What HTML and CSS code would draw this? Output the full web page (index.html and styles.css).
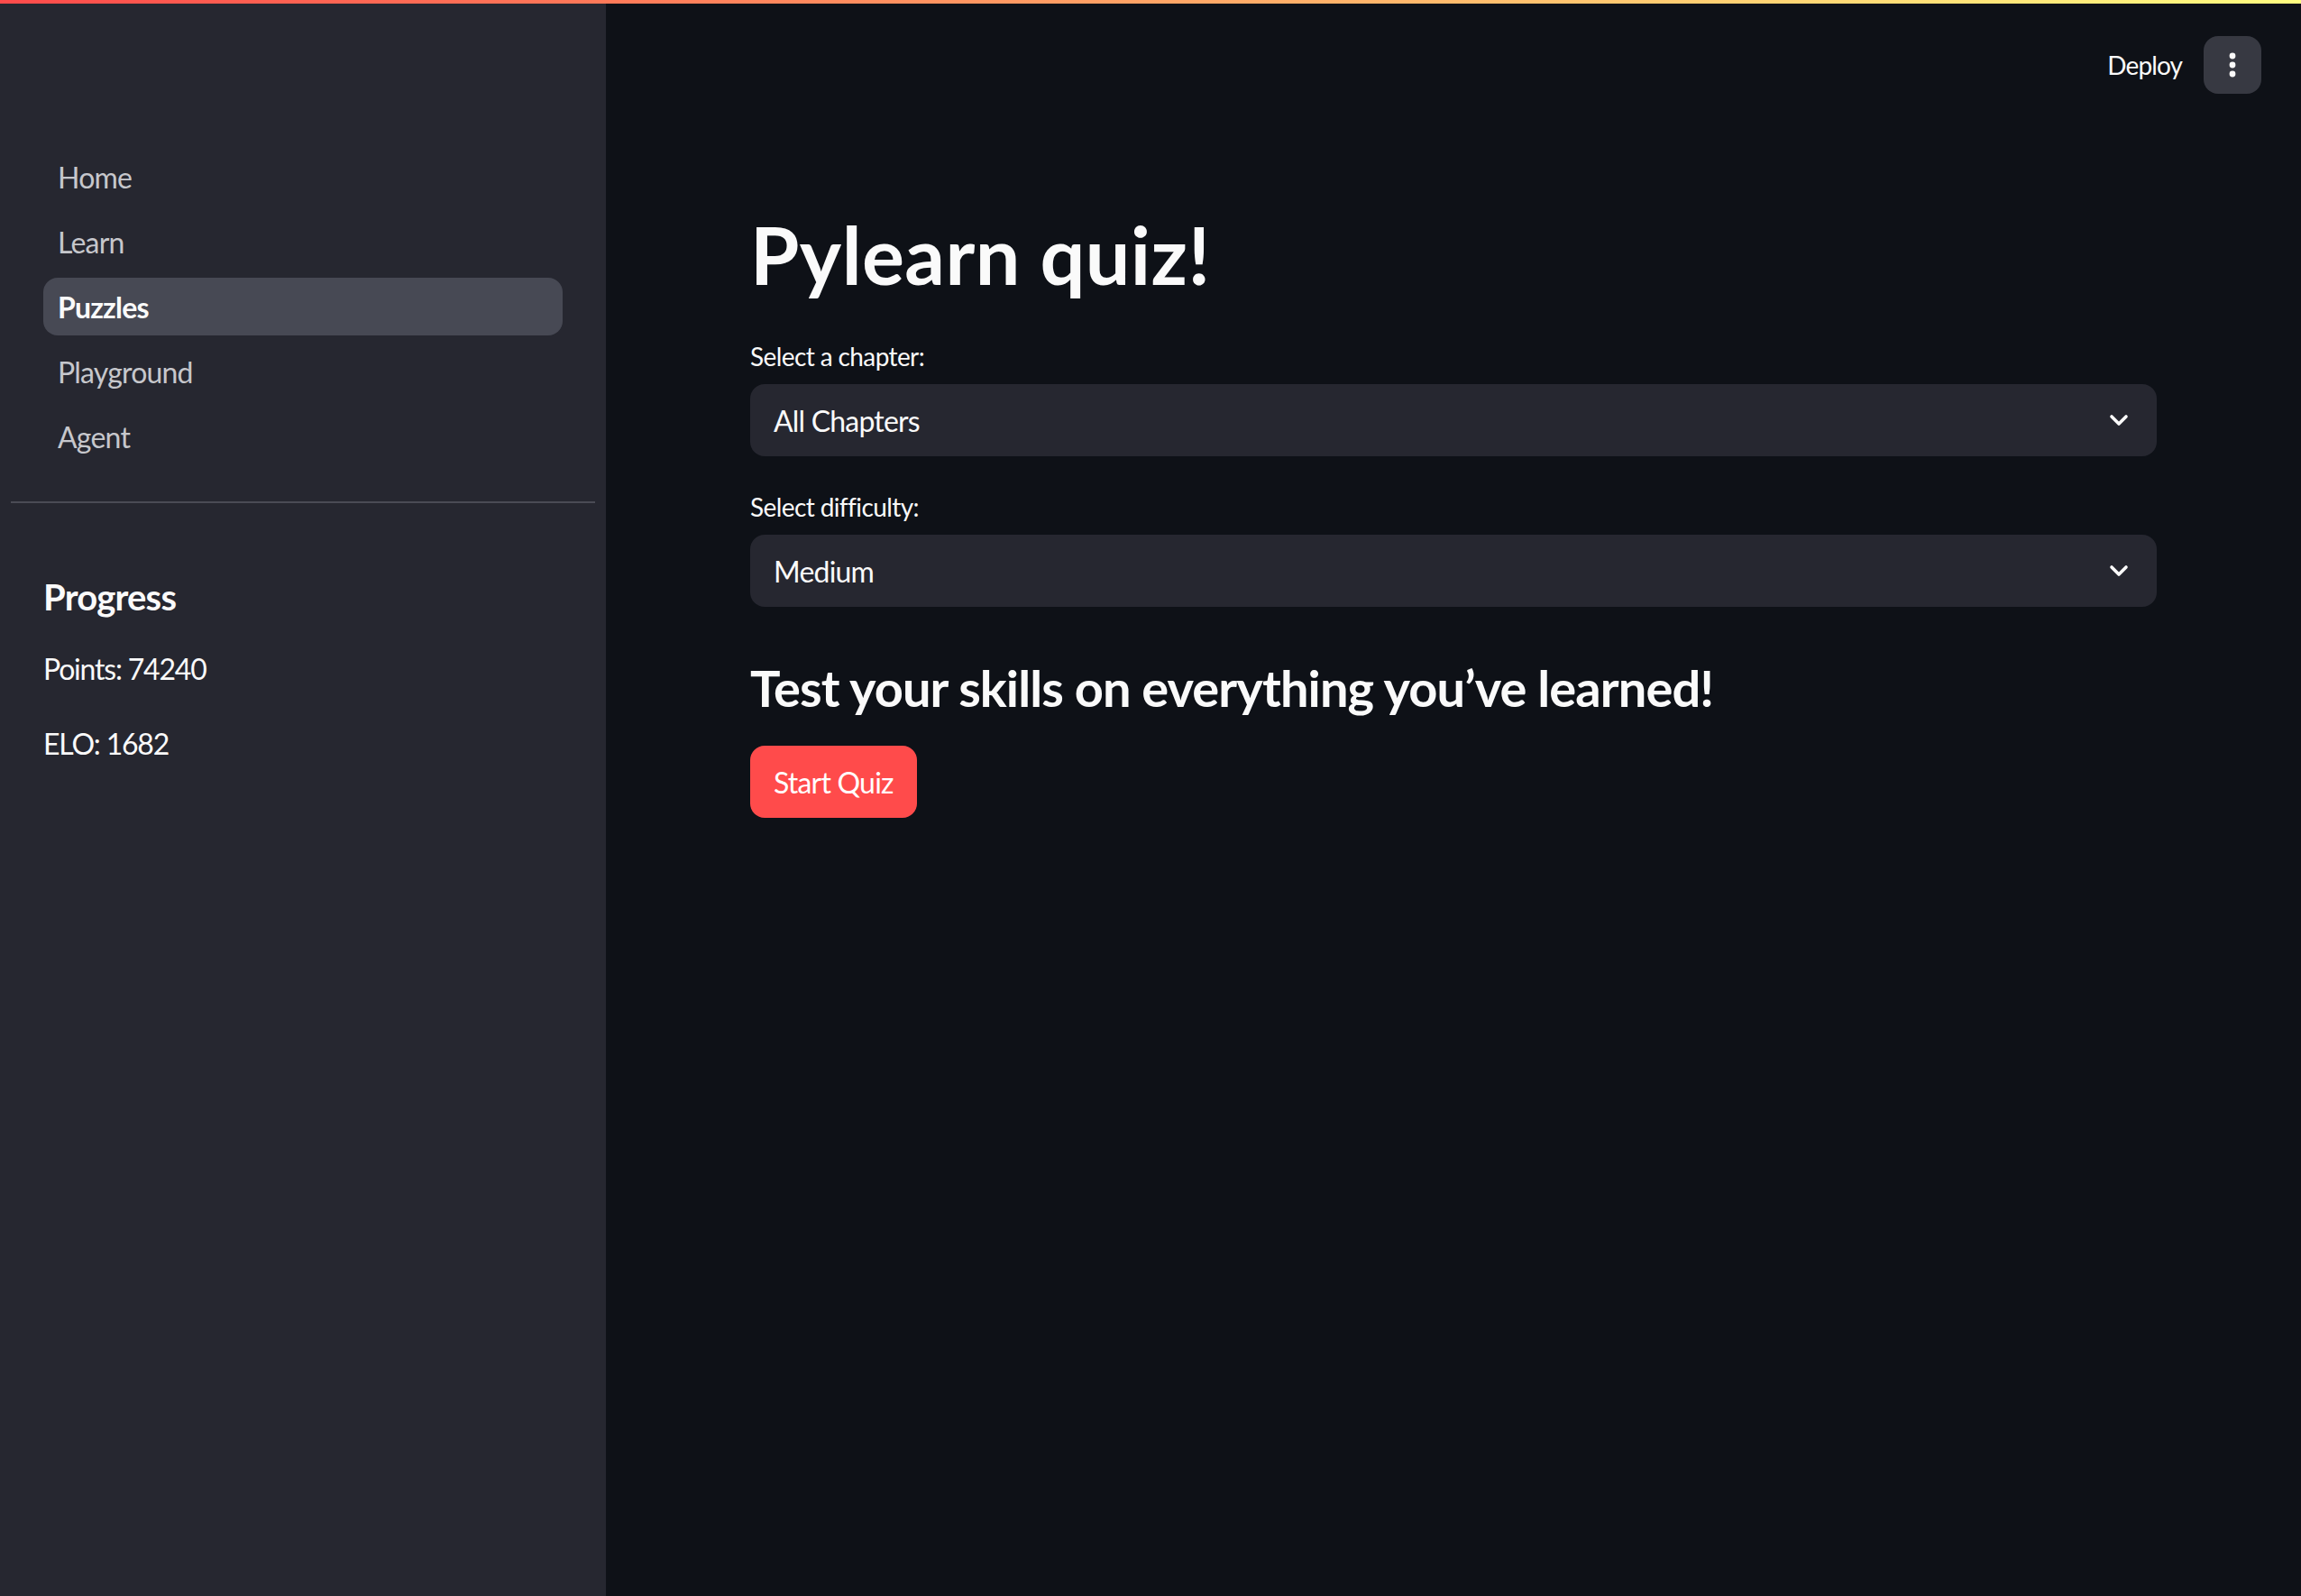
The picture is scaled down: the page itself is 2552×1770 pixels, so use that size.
FILE: index.html
```html
<!DOCTYPE html>
<html lang="en">
<head>
<meta charset="utf-8">
<title>Pylearn quiz</title>
<link rel="stylesheet" href="styles.css">
</head>
<body>
<div class="decoration"></div>
<div class="app">
  <aside class="sidebar">
    <nav class="nav">
      <a class="nav-item">Home</a>
      <a class="nav-item">Learn</a>
      <a class="nav-item active">Puzzles</a>
      <a class="nav-item">Playground</a>
      <a class="nav-item">Agent</a>
    </nav>
    <hr class="divider">
    <div class="side-content">
      <h3 class="side-title">Progress</h3>
      <p class="side-text">Points: 74240</p>
      <p class="side-text">ELO: 1682</p>
    </div>
  </aside>
  <main class="main">
    <header class="toolbar">
      <span class="deploy">Deploy</span>
      <button class="menu-btn" aria-label="menu">
        <svg width="8" height="28" viewBox="0 0 8 28"><circle cx="4" cy="4" r="3.4" fill="#fafafa"/><circle cx="4" cy="14" r="3.4" fill="#fafafa"/><circle cx="4" cy="24" r="3.4" fill="#fafafa"/></svg>
      </button>
    </header>
    <section class="content">
      <h1 class="title">Pylearn quiz!</h1>
      <label class="field-label">Select a chapter:</label>
      <div class="select">
        <span>All Chapters</span>
        <svg class="chev" width="22" height="14" viewBox="0 0 22 14"><polyline points="3,3 11,11 19,3" fill="none" stroke="#fafafa" stroke-width="3.6" stroke-linecap="round" stroke-linejoin="round"/></svg>
      </div>
      <label class="field-label second">Select difficulty:</label>
      <div class="select">
        <span>Medium</span>
        <svg class="chev" width="22" height="14" viewBox="0 0 22 14"><polyline points="3,3 11,11 19,3" fill="none" stroke="#fafafa" stroke-width="3.6" stroke-linecap="round" stroke-linejoin="round"/></svg>
      </div>
      <h3 class="subtitle">Test your skills on everything you’ve learned!</h3>
      <div><button class="primary-btn">Start Quiz</button></div>
    </section>
  </main>
</div>
</body>
</html>
```
FILE: styles.css
```css
* { box-sizing: border-box; }
html, body {
  margin: 0;
  padding: 0;
  height: 100%;
}
body {
  background: #0e1117;
  color: #fafafa;
  font-family: "Source Sans Pro", Lato, "Liberation Sans", sans-serif;
  overflow: hidden;
}
.decoration {
  position: fixed;
  top: 0;
  left: 0;
  right: 0;
  height: 4px;
  background: linear-gradient(90deg, #ff4b4b, #fffd80);
  z-index: 10;
}
.app {
  display: flex;
  height: 1770px;
}
.sidebar {
  width: 672px;
  flex: 0 0 672px;
  background: #262730;
  display: flex;
  flex-direction: column;
}
.nav {
  display: flex;
  flex-direction: column;
  gap: 8px;
  padding: 164px 48px 0 48px;
}
.nav-item {
  display: flex;
  align-items: center;
  height: 64px;
  padding: 0 16px;
  border-radius: 16px;
  font-size: 32px;
  letter-spacing: -0.8px;
  color: #c6c7cc;
}
.nav-item.active {
  background: #474954;
  color: #fafafa;
  font-weight: 700;
}
.divider {
  margin: 40px 12px 0 12px;
  border: 0;
  height: 2px;
  background: #4a4b55;
}
.side-content {
  padding: 0 48px;
}
.side-title {
  margin: 80px 0 0 0;
  font-size: 40px;
  font-weight: 700;
  line-height: 48px;
  letter-spacing: -0.8px;
}
.side-text {
  margin: 30px 0 0 0;
  font-size: 32px;
  line-height: 52px;
  letter-spacing: -1.2px;
}
.side-text + .side-text {
  margin-top: 31px;
}
.main {
  flex: 1;
  display: flex;
  flex-direction: column;
}
.toolbar {
  display: flex;
  justify-content: flex-end;
  align-items: center;
  gap: 24px;
  padding: 40px 44px 0 0;
  height: 104px;
}
.deploy {
  font-size: 28px;
  letter-spacing: -0.9px;
  color: #fafafa;
}
.menu-btn {
  width: 64px;
  height: 64px;
  border: 0;
  border-radius: 16px;
  background: #373942;
  display: flex;
  align-items: center;
  justify-content: center;
  padding: 0;
}
.content {
  display: flex;
  flex-direction: column;
  padding: 0 160px;
}
.title {
  margin: 125px 0 0 0;
  font-size: 88px;
  font-weight: 700;
  line-height: 106px;
  letter-spacing: 0.4px;
}
.field-label {
  margin-top: 39px;
  font-size: 28px;
  line-height: 42px;
  letter-spacing: -0.6px;
}
.field-label.second {
  margin-top: 35px;
}
.select {
  margin-top: 10px;
  height: 80px;
  background: #262730;
  border-radius: 16px;
  display: flex;
  align-items: center;
  justify-content: space-between;
  padding: 0 31px 0 26px;
  font-size: 32px;
  letter-spacing: -0.8px;
}
.subtitle {
  margin: 56px 0 0 0;
  font-size: 56px;
  font-weight: 700;
  line-height: 67px;
  letter-spacing: -0.9px;
}
.primary-btn {
  margin-top: 31px;
  height: 80px;
  padding: 0 26px;
  border: 0;
  border-radius: 16px;
  background: #ff4b4b;
  color: #ffffff;
  font-family: inherit;
  font-size: 32px;
  letter-spacing: -0.8px;
}
```
